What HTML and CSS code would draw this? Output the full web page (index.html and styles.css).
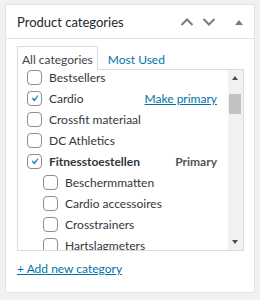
FILE: index.html
```html
<!DOCTYPE html>
<html>
<head>
<meta charset="utf-8">
<link rel="stylesheet" href="styles.css">
</head>
<body>
<div class="postbox">
  <div class="postbox-header">
    <h2 class="hndle">Product categories</h2>
    <div class="handle-actions">
      <svg class="ico" width="14" height="10" viewBox="0 0 14 10"><path d="M1.5 8 L7 2.5 L12.5 8" fill="none" stroke="#787c82" stroke-width="2"/></svg>
      <svg class="ico" width="14" height="10" viewBox="0 0 14 10"><path d="M1.5 2 L7 7.5 L12.5 2" fill="none" stroke="#787c82" stroke-width="2"/></svg>
      <svg class="ico tri" width="8" height="6" viewBox="0 0 8 6"><path d="M0 6 L4 1 L8 6 Z" fill="#787c82"/></svg>
    </div>
  </div>
  <div class="inside">
    <ul class="tabs">
      <li class="tab active">All categories</li>
      <li class="tab"><a>Most Used</a></li>
    </ul>
    <div class="panel">
      <ul class="checklist">
        <li class="row"><span class="cb"></span><span class="lbl">Bestsellers</span></li>
        <li class="row"><span class="cb checked"><svg width="13" height="13" viewBox="0 0 20 20"><path d="M14.83 4.89l1.34.94-5.81 8.38H9.02L5.78 9.670l1.34-1.25 2.57 2.4z" fill="#1e8cbe"/></svg></span><span class="lbl">Cardio</span><a class="make">Make primary</a></li>
        <li class="row"><span class="cb"></span><span class="lbl">Crossfit materiaal</span></li>
        <li class="row"><span class="cb"></span><span class="lbl">DC Athletics</span></li>
        <li class="row"><span class="cb checked"><svg width="13" height="13" viewBox="0 0 20 20"><path d="M14.83 4.89l1.34.94-5.81 8.38H9.02L5.78 9.67l1.34-1.25 2.57 2.4z" fill="#1e8cbe"/></svg></span><span class="lbl bold">Fitnesstoestellen</span><span class="primary">Primary</span></li>
        <li class="row child"><span class="cb"></span><span class="lbl">Beschermmatten</span></li>
        <li class="row child"><span class="cb"></span><span class="lbl">Cardio accessoires</span></li>
        <li class="row child"><span class="cb"></span><span class="lbl">Crosstrainers</span></li>
        <li class="row child"><span class="cb"></span><span class="lbl">Hartslagmeters</span></li>
      </ul>
      <div class="scrollbar">
        <div class="arrow up"></div>
        <div class="track"><div class="thumb"></div></div>
        <div class="arrow down"></div>
      </div>
    </div>
    <a class="add">+ Add new category</a>
  </div>
</div>
</body>
</html>
```
FILE: styles.css
```css
html, body { margin: 0; padding: 0; }
body {
  background: #f1f1f1;
  font-family: Lato, "Noto Sans", sans-serif;
  font-size: 12px;
  color: #444;
  padding: 4px 5px 0 5px;
  width: 250px;
}
.postbox {
  background: #fff;
  border: 1px solid #e2e4e7;
  height: 289px;
  box-sizing: border-box;
  display: flex;
  flex-direction: column;
}
.postbox-header {
  height: 33px;
  border-bottom: 1px solid #e2e4e7;
  display: flex;
  align-items: center;
  justify-content: space-between;
  padding: 0 11px 0 11px;
}
.hndle {
  margin: 0;
  font-size: 13px;
  font-weight: 400;
  color: #23282d;
}
.handle-actions {
  display: flex;
  align-items: center;
  gap: 8px;
}
.ico.tri { margin-left: 11px; }
.inside {
  padding: 7px 11px 0 11px;
}
.tabs {
  list-style: none;
  margin: 0;
  padding: 0;
  display: flex;
  height: 24px;
  position: relative;
  z-index: 1;
}
.tab {
  padding: 5px 4px 0 4px;
  border: 1px solid transparent;
  border-bottom: none;
  height: 24px;
  box-sizing: border-box;
  color: #444;
  margin-right: 5px;
}
.tab.active {
  border-color: #dcdcde;
  background: #fff;
}
.tab a { color: #0073aa; }
.panel {
  border: 1px solid #dcdcde;
  margin-top: -1px;
  height: 182px;
  box-sizing: border-box;
  display: flex;
  overflow: hidden;
  width: 227px;
}
.checklist {
  list-style: none;
  margin: 0;
  padding: 0 0 0 9px;
  flex: 1;
  overflow: hidden;
}
.row {
  height: 21px;
  display: flex;
  align-items: center;
  white-space: nowrap;
  margin-top: 0;
}
.row:first-child { margin-top: -3px; }
.row.child { padding-left: 16px; }
.cb {
  width: 15px;
  height: 15px;
  box-sizing: border-box;
  border: 1px solid #8c8f94;
  border-radius: 4px;
  display: flex;
  align-items: center;
  justify-content: center;
  flex: none;
  margin-right: 7px;
}
.lbl { color: #32373c; }
.lbl.bold { font-weight: 700; }
.make {
  margin-left: auto;
  margin-right: 11px;
  color: #0073aa;
  text-decoration: underline;
}
.primary {
  margin-left: auto;
  margin-right: 11px;
  font-weight: 700;
  color: #555;
}
.scrollbar {
  width: 15px;
  background: #f1f1f1;
  display: flex;
  flex-direction: column;
  flex: none;
}
.arrow { height: 17px; position: relative; }
.arrow::after {
  content: "";
  position: absolute;
  left: 4px;
  border-left: 3.5px solid transparent;
  border-right: 3.5px solid transparent;
}
.arrow.up::after { top: 6px; border-bottom: 4px solid #505050; }
.arrow.down::after { top: 7px; border-top: 4px solid #505050; }
.track { flex: 1; padding: 0 2px 0 1px; }
.thumb { height: 20px; background: #c1c1c1; margin-top: 7px; }
.add {
  display: block;
  margin-top: 10px;
  color: #0073aa;
  text-decoration: underline;
}
```
